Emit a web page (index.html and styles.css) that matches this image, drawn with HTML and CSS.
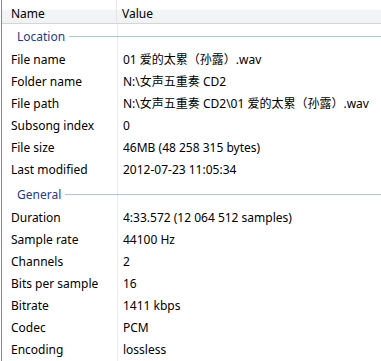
FILE: index.html
```html
<!DOCTYPE html>
<html>
<head>
<meta charset="utf-8">
<link rel="stylesheet" href="styles.css">
</head>
<body>
<div class="list">
  <div class="header">
    <div class="col name">Name</div>
    <div class="col value">Value</div>
  </div>
  <div class="group"><span class="gtitle">Location</span><span class="gline"></span></div>
  <div class="row"><div class="name">File name</div><div class="value">01 爱的太累（孙露）.wav</div></div>
  <div class="row"><div class="name">Folder name</div><div class="value">N:\女声五重奏 CD2</div></div>
  <div class="row"><div class="name">File path</div><div class="value">N:\女声五重奏 CD2\01 爱的太累（孙露）.wav</div></div>
  <div class="row"><div class="name">Subsong index</div><div class="value">0</div></div>
  <div class="row"><div class="name">File size</div><div class="value">46MB (48 258 315 bytes)</div></div>
  <div class="row"><div class="name">Last modified</div><div class="value">2012-07-23 11:05:34</div></div>
  <div class="group next"><span class="gtitle">General</span><span class="gline"></span></div>
  <div class="row"><div class="name">Duration</div><div class="value">4:33.572 (12 064 512 samples)</div></div>
  <div class="row"><div class="name">Sample rate</div><div class="value">44100 Hz</div></div>
  <div class="row"><div class="name">Channels</div><div class="value">2</div></div>
  <div class="row"><div class="name">Bits per sample</div><div class="value">16</div></div>
  <div class="row"><div class="name">Bitrate</div><div class="value">1411 kbps</div></div>
  <div class="row"><div class="name">Codec</div><div class="value">PCM</div></div>
  <div class="row"><div class="name">Encoding</div><div class="value">lossless</div></div>
</div>
</body>
</html>
```
FILE: styles.css
```css
html, body {
  margin: 0;
  padding: 0;
  background: #fff;
}
body {
  font-family: "Noto Sans", "Noto Sans CJK SC", sans-serif;
  font-size: 12px;
  color: #000;
}
.list {
  width: 380px;
  height: 361px;
  margin-left: 1px;
  border-left: 1px solid #828790;
  box-sizing: border-box;
  overflow: hidden;
  background: linear-gradient(to right, transparent 115px, #ececec 115px, #ececec 116px, transparent 116px);
}
.header {
  display: flex;
  height: 23px;
  border-bottom: 1px solid #d5d5d5;
  background: linear-gradient(to bottom, #ffffff 0, #ffffff 40%, #f3f4f6 45%, #f1f2f4 100%);
}
.header .col {
  display: flex;
  align-items: center;
  box-sizing: border-box;
  padding-top: 3px;
}
.header .name {
  width: 115px;
  padding-left: 9px;
  border-right: 1px solid #e3e5e8;
}
.header .value {
  flex: 1;
  padding-left: 5px;
}
.group {
  display: flex;
  align-items: center;
  height: 24px;
  padding-left: 15px;
}
.group.next {
  margin-top: 2px;
}
.gtitle {
  color: #1e3c8c;
  padding-right: 4px;
}
.gline {
  flex: 1;
  height: 1px;
  background: #b4c4d2;
}
.row {
  display: flex;
  align-items: center;
  height: 22px;
}
.row .name {
  width: 116px;
  padding-left: 9px;
  box-sizing: border-box;
}
.row .value {
  flex: 1;
  padding-left: 5px;
  white-space: nowrap;
}
```
